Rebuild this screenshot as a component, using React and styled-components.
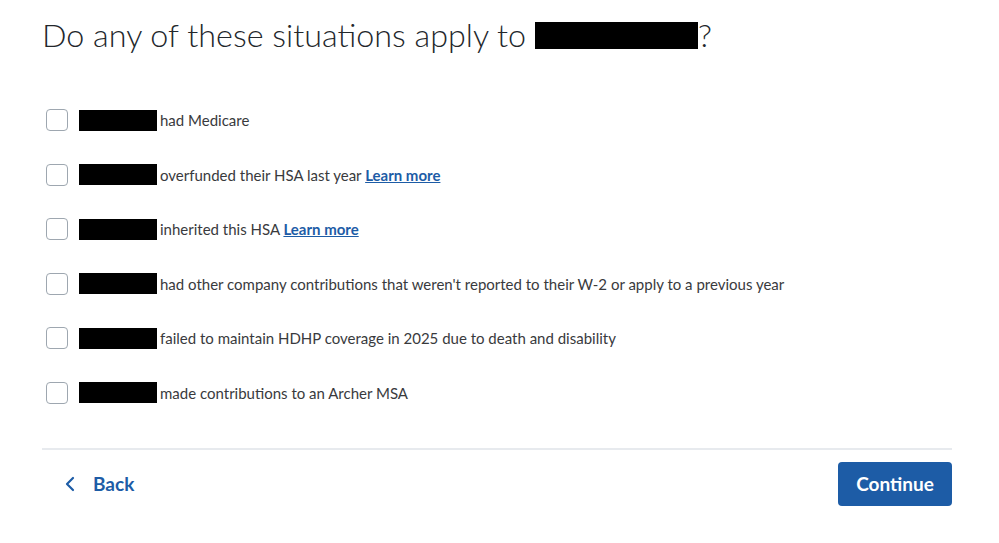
import React, { useState } from 'react';
import styled, { createGlobalStyle } from 'styled-components';

const GlobalStyle = createGlobalStyle`
  html, body {
    margin: 0;
    padding: 0;
    background: #ffffff;
  }
  body {
    font-family: Lato, "Noto Sans", "Liberation Sans", sans-serif;
    color: #2b2f33;
  }
`;

const items = [
  { text: 'had Medicare' },
  { text: 'overfunded their HSA last year', link: true },
  { text: 'inherited this HSA', link: true },
  { text: "had other company contributions that weren't reported to their W-2 or apply to a previous year" },
  { text: 'failed to maintain HDHP coverage in 2025 due to death and disability' },
  { text: 'made contributions to an Archer MSA' },
];

function App() {
  const [checked, setChecked] = useState({});
  return (
    <>
      <GlobalStyle />
      <Page>
        <Title>
          Do any of these situations apply to <Redacted $w={163} $h={27} />?
        </Title>
        <List>
          {items.map((item, i) => (
            <Row key={i}>
              <Box
                type="checkbox"
                checked={!!checked[i]}
                onChange={() => setChecked({ ...checked, [i]: !checked[i] })}
              />
              <Redacted $w={78} $h={21} />
              <Label>
                {item.text}
                {item.link && <> <LearnMore href="#">Learn more</LearnMore></>}
              </Label>
            </Row>
          ))}
        </List>
        <Divider />
        <Footer>
          <BackButton>
            <svg width="12" height="16" viewBox="0 0 12 16" fill="none">
              <path d="M9 2L3 8l6 6" stroke="#1d5ca6" strokeWidth="2.2" strokeLinecap="round" strokeLinejoin="round" />
            </svg>
            <span>Back</span>
          </BackButton>
          <ContinueButton>Continue</ContinueButton>
        </Footer>
      </Page>
    </>
  );
}

export default App;

const Page = styled.div`
  width: 910px;
  padding: 13px 0 0 42px;
`;

const Title = styled.h1`
  margin: 0;
  font-weight: 300;
  font-size: 32.3px;
  line-height: 44px;
  color: #23272b;
  display: flex;
  align-items: center;
  white-space: pre;
`;

const Redacted = styled.span`
  display: inline-block;
  width: ${p => p.$w}px;
  height: ${p => p.$h}px;
  background: #000;
  flex-shrink: 0;
`;

const List = styled.div`
  display: flex;
  flex-direction: column;
  gap: 32.6px;
  margin-top: 52px;
  padding-left: 4px;
`;

const Row = styled.label`
  display: flex;
  align-items: center;
  height: 22px;
  cursor: pointer;
`;

const Box = styled.input`
  appearance: none;
  margin: 0 11px 0 0;
  width: 22px;
  height: 22px;
  border: 1px solid #9ea7b0;
  border-radius: 4px;
  background: #fff;
  cursor: pointer;
  &:checked {
    background: #1d5ca6;
    border-color: #1d5ca6;
  }
`;

const Label = styled.span`
  margin-left: 3px;
  font-size: 15px;
  color: #393a3d;
`;

const LearnMore = styled.a`
  color: #1d5ca6;
  font-weight: 700;
  text-decoration: underline;
`;

const Divider = styled.hr`
  margin: 44px 0 0;
  border: none;
  border-top: 2px solid #e7eaee;
`;

const Footer = styled.div`
  display: flex;
  justify-content: space-between;
  align-items: center;
  margin-top: 12px;
`;

const BackButton = styled.button`
  display: flex;
  align-items: center;
  gap: 17px;
  padding: 0 0 0 22px;
  border: none;
  background: none;
  font-family: inherit;
  font-size: 19px;
  font-weight: 700;
  color: #1d5ca6;
  cursor: pointer;
`;

const ContinueButton = styled.button`
  width: 114px;
  height: 44px;
  border: none;
  border-radius: 4px;
  background: #1d5ca6;
  color: #fff;
  font-family: inherit;
  font-size: 19px;
  font-weight: 700;
  cursor: pointer;
`;
